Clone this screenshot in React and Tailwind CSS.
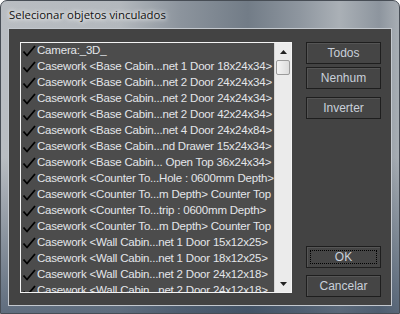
import React from 'react';

const rows = [
  'Camera:_3D_',
  'Casework <Base Cabin...net 1 Door 18x24x34>',
  'Casework <Base Cabin...net 2 Door 24x24x34>',
  'Casework <Base Cabin...net 2 Door 24x24x34>',
  'Casework <Base Cabin...net 2 Door 42x24x34>',
  'Casework <Base Cabin...net 4 Door 24x24x84>',
  'Casework <Base Cabin...nd Drawer 15x24x34>',
  'Casework <Base Cabin... Open Top 36x24x34>',
  'Casework <Counter To...Hole : 0600mm Depth>',
  'Casework <Counter To...m Depth> Counter Top',
  'Casework <Counter To...trip : 0600mm Depth>',
  'Casework <Counter To...m Depth> Counter Top',
  'Casework <Wall Cabin...net 1 Door 15x12x25>',
  'Casework <Wall Cabin...net 1 Door 18x12x25>',
  'Casework <Wall Cabin...net 2 Door 24x12x18>',
  'Casework <Wall Cabin...net 2 Door 24x12x18>',
];

function Check() {
  return (
    <svg width="14" height="12" viewBox="0 0 14 12" className="shrink-0">
      <path d="M1.5 6.5 L5 10.5 L13 1" fill="none" stroke="#000" strokeWidth="1.8" strokeLinejoin="round" />
    </svg>
  );
}

function Row({ label }) {
  return (
    <div className="flex h-[16px] shrink-0 items-center gap-[1px] pl-[1px]">
      <Check />
      <span className="whitespace-nowrap text-[11.5px] leading-none tracking-[-0.2px] text-[#e4e6ea]">{label}</span>
    </div>
  );
}

function Scrollbar() {
  return (
    <div className="flex w-[17px] shrink-0 flex-col border-l border-[#d6d6d6] bg-[#ebebeb]">
      <div className="flex h-[17px] items-center justify-center">
        <svg width="7" height="4" viewBox="0 0 7 4"><path d="M0 4 L3.5 0 L7 4 Z" fill="#222" /></svg>
      </div>
      <div className="mx-[1px] h-[15px] rounded-[2px] border border-[#9b9b9b] bg-[linear-gradient(to_right,#f4f4f4,#dcdcdc)]" />
      <div className="flex-1" />
      <div className="flex h-[17px] items-center justify-center">
        <svg width="7" height="4" viewBox="0 0 7 4"><path d="M0 0 L7 0 L3.5 4 Z" fill="#222" /></svg>
      </div>
    </div>
  );
}

function Btn({ children, focused }) {
  return (
    <button className="relative flex h-[22px] w-[75px] items-center justify-center border border-[#1e1e1e] bg-[#454545] text-[12px] text-[#c9d0da] shadow-[inset_1px_1px_0_#555]">
      {focused && <span className="absolute inset-[3px] border border-dotted border-[#000]" />}
      {children}
    </button>
  );
}

export default function App() {
  return (
    <div className="h-[314px] w-[400px] overflow-hidden bg-white" style={{ fontFamily: '"Liberation Sans", Arial, sans-serif' }}>
      <div className="flex h-full w-full flex-col rounded-t-[7px] border border-[#474d55] bg-[linear-gradient(to_bottom,transparent_0%,transparent_50%,rgba(35,55,80,0.6)_100%),linear-gradient(to_right,#b9bdc2_0%,#b3b8bd_30%,#8c949d_45%,#727c87_62%,#8e969f_75%,#aab0b6_85%,#8d959e_95%,#a8aeb4_100%)] px-[7px] pb-[7px]">
        <div className="flex h-[27px] shrink-0 items-center pl-[1px]">
          <span className="text-[11.4px] text-[#111] [text-shadow:0_0_6px_#fff,0_0_4px_#fff]" style={{ fontFamily: '"Open Sans", "Noto Sans", sans-serif' }}>
            Selecionar objetos vinculados
          </span>
        </div>
        <div className="flex flex-1 border border-[#c3c8ce] bg-[#434343]">
          <div className="ml-[11px] mt-[13px] flex h-[251px] w-[272px] border border-[#f4f4f4] bg-[#4c4c4c]">
            <div className="flex flex-1 flex-col overflow-hidden">
              {rows.map((r, i) => (
                <Row key={i} label={r} />
              ))}
            </div>
            <Scrollbar />
          </div>
          <div className="ml-[14px] mt-[13px] flex h-[255px] flex-col">
            <Btn>Todos</Btn>
            <div className="mt-[3px]"><Btn>Nenhum</Btn></div>
            <div className="mt-[8px]"><Btn>Inverter</Btn></div>
            <div className="flex-1" />
            <Btn focused>OK</Btn>
            <div className="mt-[7px]"><Btn>Cancelar</Btn></div>
          </div>
        </div>
      </div>
    </div>
  );
}
